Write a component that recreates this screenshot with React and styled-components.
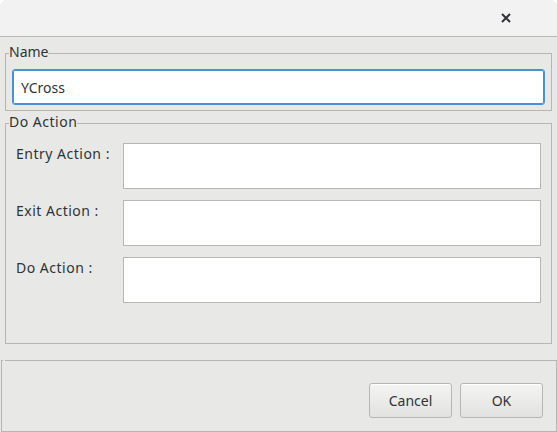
import React from "react";
import styled, { createGlobalStyle } from "styled-components";

const GlobalStyle = createGlobalStyle`
  html, body { margin: 0; padding: 0; background: #ffffff; }
  body { font-family: "Noto Sans", "DejaVu Sans", sans-serif; }
  * { box-sizing: border-box; }
`;

const Window = styled.div`
  width: 557px;
  height: 432px;
  display: flex;
  flex-direction: column;
  background: #e8e8e7;
  border-radius: 7px 7px 0 0;
  overflow: hidden;
  color: #2e3436;
  font-size: 14px;
`;

const TitleBar = styled.header`
  height: 37px;
  flex: none;
  background: #f2f2f2;
  border-bottom: 1px solid #b6b6b3;
  display: flex;
  justify-content: flex-end;
  align-items: center;
  padding-right: 39px;
`;

const CloseButton = styled.button`
  width: 24px;
  height: 24px;
  padding: 0;
  border: none;
  background: transparent;
  display: flex;
  align-items: center;
  justify-content: center;
  color: #2e3436;
`;

const Group = styled.fieldset`
  margin: ${(p) => p.$mt}px 5px 0 5px;
  padding: 0;
  border: 1px solid #b6b6b3;
  min-width: 0;
  flex: none;
`;

const GroupBody = styled.div`
  padding: ${(p) => p.$pad};
`;

const Legend = styled.legend`
  margin-left: 3px;
  padding: 0 0 4px 0;
  font-size: 14px;
  line-height: 19px;
  color: #2e3436;
  letter-spacing: ${(p) => p.$ls || 0}px;
`;

const NameInput = styled.input`
  display: block;
  width: 100%;
  height: 36px;
  border: 1px solid #4a90d9;
  box-shadow: inset 0 0 0 1px #4a90d9;
  border-radius: 3px;
  background: #ffffff;
  padding: 0 8px;
  font-family: inherit;
  font-size: 14px;
  color: #2e3436;
  outline: none;
`;

const Rows = styled.div`
  display: flex;
  flex-direction: column;
  gap: 11px;
`;

const Row = styled.div`
  display: grid;
  grid-template-columns: 107px 1fr;
  align-items: start;
`;

const Label = styled.label`
  padding-top: 1px;
  line-height: 19px;
  white-space: nowrap;
  letter-spacing: 0.5px;
`;

const TextBox = styled.textarea`
  display: block;
  width: 100%;
  height: 46px;
  border: 1px solid #b6b6b3;
  background: #ffffff;
  resize: none;
  margin: 0;
  padding: 4px;
  font-family: inherit;
  font-size: 14px;
  outline: none;
`;

const ButtonPanel = styled.fieldset`
  margin: 16px 0 0 1px;
  padding: 0;
  border: 1px solid #b6b6b3;
  flex: 1;
  min-width: 0;
`;

const GapLegend = styled.legend`
  margin-left: 1px;
  padding: 0 0 0 2px;
  height: 0;
  font-size: 0;
`;

const ButtonRow = styled.div`
  display: flex;
  justify-content: flex-end;
  gap: 8px;
  padding: 22px 13px 13px 0;
`;

const Button = styled.button`
  width: 83px;
  height: 35px;
  border: 1px solid #b6b6b3;
  border-radius: 3px;
  background: linear-gradient(to bottom, #f4f4f3, #e2e2e0);
  box-shadow: inset 0 1px 0 #ffffff;
  font-family: inherit;
  font-size: 14px;
  color: #2e3436;
  padding: 0;
`;

function CloseIcon() {
  return (
    <svg width="10" height="10" viewBox="0 0 10 10">
      <path d="M1 1 L9 9 M9 1 L1 9" stroke="#2e3436" strokeWidth="2" strokeLinecap="butt" />
    </svg>
  );
}

const actions = ["Entry Action :", "Exit Action :", "Do Action :"];

export default function App() {
  return (
    <>
      <GlobalStyle />
      <Window>
        <TitleBar>
          <CloseButton aria-label="Close">
            <CloseIcon />
          </CloseButton>
        </TitleBar>
        <Group $mt={5}>
          <Legend>Name</Legend>
          <GroupBody $pad="4px 6px 5px 6px">
            <NameInput defaultValue="YCross" />
          </GroupBody>
        </Group>
        <Group $mt={1}>
          <Legend $ls={0.5}>Do Action</Legend>
          <GroupBody $pad="8px 10px 40px 10px">
            <Rows>
              {actions.map((a) => (
                <Row key={a}>
                  <Label>{a}</Label>
                  <TextBox />
                </Row>
              ))}
            </Rows>
          </GroupBody>
        </Group>
        <ButtonPanel>
          <GapLegend />
          <ButtonRow>
            <Button>Cancel</Button>
            <Button>OK</Button>
          </ButtonRow>
        </ButtonPanel>
      </Window>
    </>
  );
}
